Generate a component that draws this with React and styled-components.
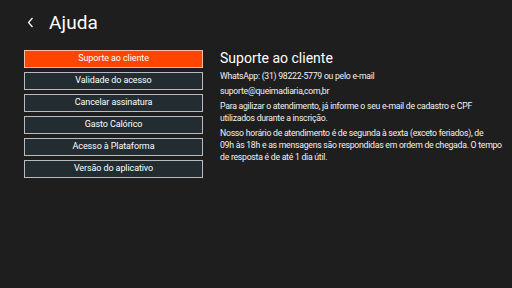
import React from "react";
import styled, { createGlobalStyle } from "styled-components";

const GlobalStyle = createGlobalStyle`
  html, body {
    margin: 0;
    padding: 0;
    background: #1e1e1e;
  }
  body {
    font-family: Roboto, "Liberation Sans", sans-serif;
  }
`;

const Screen = styled.div`
  width: 512px;
  height: 288px;
  background: #1e1e1e;
  color: #fff;
  display: flex;
  flex-direction: column;
  overflow: hidden;
`;

const Header = styled.div`
  display: flex;
  align-items: center;
  height: 26px;
  padding: 9px 0 0 25px;
  gap: 14px;
`;

const BackButton = styled.div`
  width: 10px;
  height: 14px;
  display: flex;
  align-items: center;
  justify-content: center;
`;

const Title = styled.h1`
  margin: 0;
  font-size: 19px;
  font-weight: 400;
  letter-spacing: 0.1px;
`;

const Body = styled.div`
  display: flex;
  padding: 15px 0 0 24px;
  gap: 17px;
`;

const Menu = styled.div`
  width: 179px;
  display: flex;
  flex-direction: column;
  gap: 4px;
`;

const MenuItem = styled.div`
  height: 18px;
  box-sizing: border-box;
  border: 1.5px solid ${(p) => (p.$active ? "#f2c0a8" : "#b8bcbd")};
  background: ${(p) => (p.$active ? "#ff4500" : "#232c30")};
  color: #fff;
  font-size: 9px;
  line-height: 15px;
  text-align: center;
  letter-spacing: -0.1px;
`;

const Content = styled.div`
  width: 284px;
`;

const ContentTitle = styled.h2`
  margin: 0 0 3px;
  font-size: 14px;
  font-weight: 400;
  line-height: 17px;
`;

const Paragraph = styled.p`
  margin: 0 0 3px;
  font-size: 8.7px;
  line-height: 12px;
  letter-spacing: -0.26px;
  color: #f2f2f2;
`;

const items = [
  "Suporte ao cliente",
  "Validade do acesso",
  "Cancelar assinatura",
  "Gasto Calórico",
  "Acesso à Plataforma",
  "Versão do aplicativo",
];

export default function App() {
  return (
    <Screen>
      <GlobalStyle />
      <Header>
        <BackButton>
          <svg width="7" height="11" viewBox="0 0 7 11">
            <path d="M5.5 1 L1.5 5.5 L5.5 10" stroke="#fff" strokeWidth="1.2" fill="none" />
          </svg>
        </BackButton>
        <Title>Ajuda</Title>
      </Header>
      <Body>
        <Menu>
          {items.map((item, index) => (
            <MenuItem key={index} $active={index === 0}>
              {item}
            </MenuItem>
          ))}
        </Menu>
        <Content>
          <ContentTitle>Suporte ao cliente</ContentTitle>
          <Paragraph>WhatsApp: (31) 98222-5779 ou pelo e-mail</Paragraph>
          <Paragraph>suporte@queimadiaria,com,br</Paragraph>
          <Paragraph>
            Para agilizar o atendimento, já informe o seu e-mail de cadastro e CPF
            <br />
            utilizados durante a inscrição.
          </Paragraph>
          <Paragraph>
            Nosso horário de atendimento é de segunda à sexta (exceto feriados), de
            <br />
            09h às 18h e as mensagens são respondidas em ordem de chegada. O tempo
            <br />
            de resposta é de até 1 dia útil.
          </Paragraph>
        </Content>
      </Body>
    </Screen>
  );
}
